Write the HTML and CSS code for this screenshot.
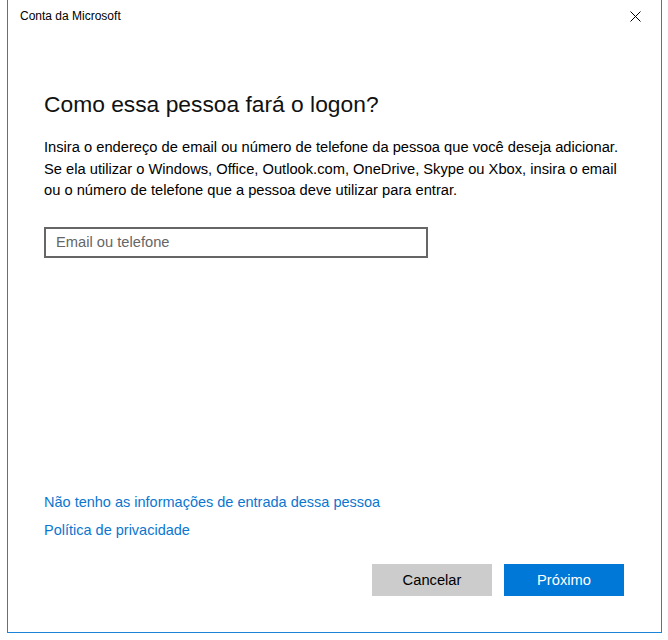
FILE: index.html
```html
<!DOCTYPE html>
<html lang="pt-BR">

<head>
    <meta charset="UTF-8">
    <meta name="viewport" content="width=device-width, initial-scale=1.0">
    <title>Conta da Microsoft</title>
    <link rel="stylesheet" href="styles.css">
</head>

<body>

    <div class="window">
        <div class="titlebar">
            <span class="title">Conta da Microsoft</span>
            <span class="close">
                <svg width="11" height="11" viewBox="0 0 11 11">
                    <path d="M0.5 0.5 L10.5 10.5 M10.5 0.5 L0.5 10.5" stroke="#000" stroke-width="1" fill="none" />
                </svg>
            </span>
        </div>
        <div class="content">
            <h1>Como essa pessoa fará o logon?</h1>
            <p class="desc">Insira o endereço de email ou número de telefone da pessoa que você deseja adicionar.
                Se ela utilizar o Windows, Office, Outlook.com, OneDrive, Skype ou Xbox, insira o email
                ou o número de telefone que a pessoa deve utilizar para entrar.</p>
            <input class="email" type="text" placeholder="Email ou telefone">

            <div class="links">
                <a href="#">Não tenho as informações de entrada dessa pessoa</a>
                <a href="#">Política de privacidade</a>
            </div>

            <div class="buttons">
                <button class="btn cancel">Cancelar</button>
                <button class="btn next">Próximo</button>
            </div>
        </div>
    </div>

</body>

</html>
```

FILE: styles.css
```css
* {
    margin: 0;
    padding: 0;
    box-sizing: border-box;
}

body {
    background-color: white;
    font-family: "Liberation Sans", Arial, sans-serif;
    color: #000;
}

.window {
    margin-left: 7px;
    width: 655px;
    height: 633px;
    border: 1px solid #1c84d8;
    border-top: none;
    display: flex;
    flex-direction: column;
}

.titlebar {
    height: 32px;
    display: flex;
    align-items: center;
    justify-content: space-between;
    padding: 0 20px 0 12px;
}

.title {
    font-size: 12px;
}

.close {
    display: flex;
}

.content {
    flex: 1;
    display: flex;
    flex-direction: column;
    padding: 56px 36px 36px 36px;
}

h1 {
    font-size: 22.8px;
    font-weight: normal;
    line-height: 32px;
    color: #111;
}

.desc {
    margin-top: 17px;
    font-size: 14.7px;
    line-height: 21.5px;
    width: 590px;
}

.email {
    margin-top: 25px;
    width: 384px;
    height: 31px;
    border: 2px solid #666;
    padding: 0 10px;
    font-family: inherit;
    font-size: 14.7px;
    outline: none;
}

.email::placeholder {
    color: #666;
}

.links {
    margin-top: auto;
    display: flex;
    flex-direction: column;
    gap: 7px;
}

.links a {
    color: #0b76d0;
    text-decoration: none;
    font-size: 14.5px;
    line-height: 21px;
}

.buttons {
    margin-top: 23px;
    display: flex;
    justify-content: flex-end;
    gap: 12px;
    padding-right: 1px;
}

.btn {
    width: 120px;
    height: 32px;
    border: none;
    font-family: inherit;
    font-size: 14.7px;
    cursor: pointer;
}

.cancel {
    background-color: #cccccc;
    color: #000;
}

.next {
    background-color: #0078d7;
    color: white;
}
```
